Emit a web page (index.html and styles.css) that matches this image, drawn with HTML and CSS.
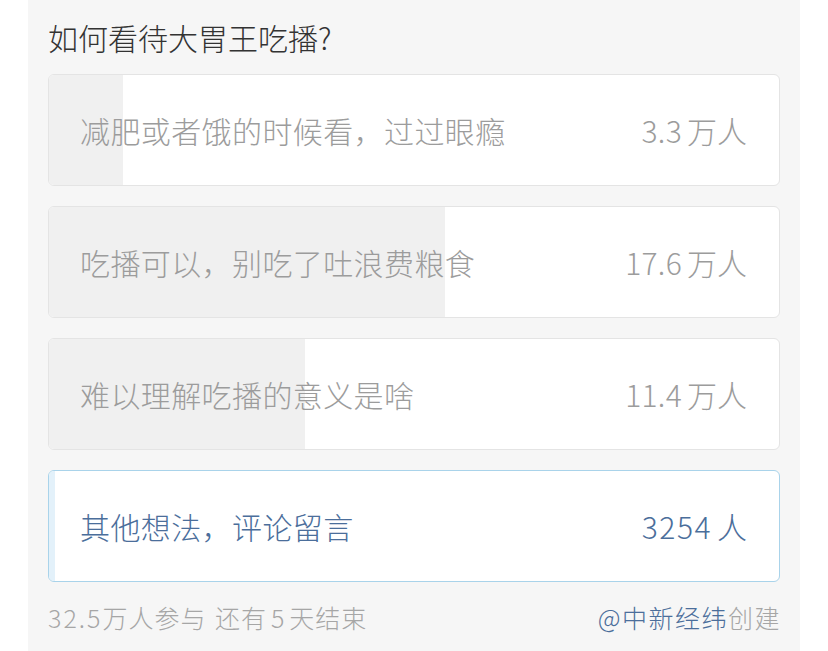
FILE: index.html
```html
<!DOCTYPE html>
<html lang="zh-CN">
<head>
<meta charset="utf-8">
<title>投票</title>
<link rel="stylesheet" href="styles.css">
</head>
<body>
<div class="panel">
  <div class="title">如何看待大胃王吃播?</div>
  <div class="options">
    <div class="option">
      <div class="fill" style="width:10.2%"></div>
      <span class="label">减肥或者饿的时候看，过过眼瘾</span>
      <span class="count">3.3<span class="unit">万人</span></span>
    </div>
    <div class="option">
      <div class="fill" style="width:54.2%"></div>
      <span class="label">吃播可以，别吃了吐浪费粮食</span>
      <span class="count">17.6<span class="unit">万人</span></span>
    </div>
    <div class="option">
      <div class="fill" style="width:35.1%"></div>
      <span class="label">难以理解吃播的意义是啥</span>
      <span class="count">11.4<span class="unit">万人</span></span>
    </div>
    <div class="option option-other">
      <div class="fill" style="width:0.8%"></div>
      <span class="label">其他想法，评论留言</span>
      <span class="count"><span class="wide">3254</span><span class="unit">人</span></span>
    </div>
  </div>
  <div class="footer">
    <span class="meta"><span class="digits">32.5</span>万人参与 还有<span class="num">5</span>天结束</span>
    <span class="creator"><span class="author">@中新经纬</span>创建</span>
  </div>
</div>
</body>
</html>
```
FILE: styles.css
```css
html, body {
  margin: 0;
  padding: 0;
  background: #ffffff;
}

body {
  font-family: "Noto Sans CJK SC", "Noto Sans", sans-serif;
  font-weight: 300;
}

.panel {
  margin: 0 28px;
  height: 651px;
  box-sizing: border-box;
  background: #f6f6f6;
  padding: 17px 20px 0 20px;
}

.title {
  font-size: 30px;
  line-height: 40px;
  color: #333333;
  margin-bottom: 17px;
}

.options {
  display: flex;
  flex-direction: column;
  gap: 20px;
}

.option {
  position: relative;
  height: 112px;
  box-sizing: border-box;
  border: 1px solid #e4e4e4;
  border-radius: 6px;
  background: #ffffff;
  overflow: hidden;
  display: flex;
  align-items: center;
  justify-content: space-between;
  padding: 0 32px 0 31px;
  color: #9c9c9c;
}

.fill {
  position: absolute;
  left: 0;
  top: 0;
  bottom: 0;
  background: #f0f0f0;
}

.label, .count {
  position: relative;
  font-size: 30px;
  line-height: 40px;
  letter-spacing: 0.4px;
}

.count {
  letter-spacing: 0.3px;
}

.count .wide {
  letter-spacing: 1.5px;
}

.unit {
  margin-left: 5px;
  letter-spacing: 0;
}

.option-other {
  border-color: #a9d3ea;
  color: #4b6e9b;
}

.option-other .fill {
  background: #e3f1fa;
}

.footer {
  display: flex;
  justify-content: space-between;
  align-items: center;
  margin-top: 18px;
  height: 34px;
  font-size: 25px;
  letter-spacing: 1px;
  color: #a6a6a6;
}

.meta {
  word-spacing: 2px;
}

.digits {
  letter-spacing: 2px;
}

.num {
  margin: 0 4px;
}

.creator {
  letter-spacing: 1.5px;
  margin-right: -1px;
}

.author {
  color: #4b6e9b;
}
```
